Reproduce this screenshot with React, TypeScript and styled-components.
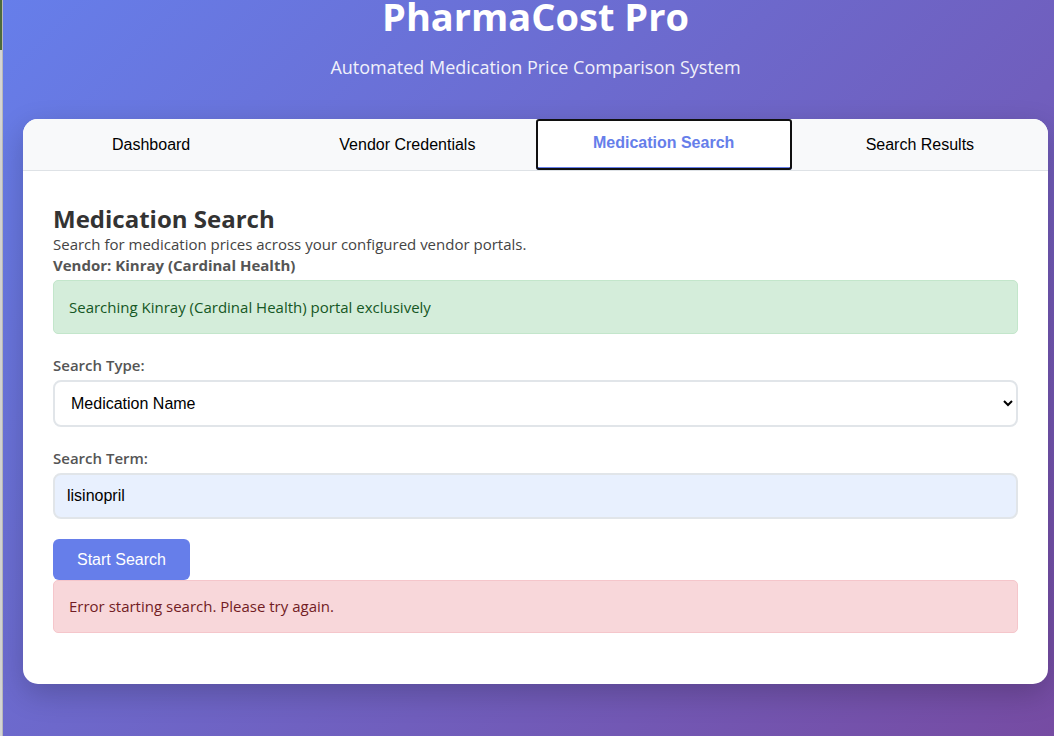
import React from "react";
import styled, { createGlobalStyle } from "styled-components";

const Global = createGlobalStyle`
  html, body { margin: 0; padding: 0; overflow: hidden; }
  body {
    width: 1054px;
    height: 736px;
    font-family: "Open Sans", "Noto Sans", sans-serif;
    background: #667eea;
  }
`;

const Screen = styled.div`
  display: flex;
  width: 1054px;
  height: 736px;
  overflow: hidden;
`;

const EdgeStrip = styled.div`
  flex: 0 0 3px;
  display: flex;
  flex-direction: column;
  background: #d4d4d4;
  border-right: 1px solid #b8b8b8;
  box-sizing: border-box;
`;

const EdgeTop = styled.div`
  height: 50px;
  background: #4c6a3c;
`;

const Page = styled.div`
  flex: 0 0 1065px;
  min-height: 736px;
  background: linear-gradient(135deg, #667eea 0%, #764ba2 100%);
  box-sizing: border-box;
  padding: 0 20px;
`;

const Header = styled.header`
  text-align: center;
  color: white;
  margin-top: -10px;
  margin-bottom: 40px;
`;

const Title = styled.h1`
  margin: 0 0 13px;
  font-size: 38px;
  font-weight: 700;
`;

const Subtitle = styled.p`
  margin: 0;
  font-size: 18px;
  opacity: 0.9;
`;

const Card = styled.main`
  background: white;
  border-radius: 15px;
  box-shadow: 0 10px 30px rgba(0, 0, 0, 0.2);
  overflow: hidden;
`;

const TabBar = styled.nav`
  display: flex;
  background: #f8f9fa;
  border-bottom: 1px solid #dee2e6;
`;

const Tab = styled.button<{ $active?: boolean }>`
  flex: 1;
  padding: 17px 20px 13px;
  border: none;
  background: ${(p) => (p.$active ? "white" : "none")};
  font-family: "Liberation Sans", Arial, sans-serif;
  font-size: 16px;
  color: ${(p) => (p.$active ? "#667eea" : "#000")};
  font-weight: ${(p) => (p.$active ? 700 : 400)};
  border-bottom: 3px solid ${(p) => (p.$active ? "#667eea" : "transparent")};
  outline: ${(p) => (p.$active ? "2px solid #101010" : "none")};
  outline-offset: -2px;
  border-radius: ${(p) => (p.$active ? "3px" : "0")};
  cursor: pointer;
`;

const ActiveLabel = styled.span`
  position: relative;
  top: -2px;
`;

const Content = styled.section`
  padding: 30px;
  color: #333;
`;

const Heading = styled.h2`
  margin: 2px 0 0;
  font-size: 24px;
  font-weight: 700;
  line-height: 1.3;
  color: #333;
`;

const Description = styled.p`
  margin: 0;
  font-size: 15px;
  line-height: 21px;
  color: #444;
`;

const VendorLine = styled.div`
  font-size: 15px;
  line-height: 21px;
  font-weight: 700;
  color: #555;
  margin-bottom: 4px;
`;

const Alert = styled.div<{ $tone: "success" | "error" }>`
  padding: 15px;
  border-radius: 5px;
  font-size: 15px;
  line-height: ${(p) => (p.$tone === "success" ? "22px" : "21px")};
  border: 1px solid ${(p) => (p.$tone === "success" ? "#c3e6cb" : "#f5c6cb")};
  background: ${(p) => (p.$tone === "success" ? "#d4edda" : "#f8d7da")};
  color: ${(p) => (p.$tone === "success" ? "#155724" : "#721c24")};
  margin-bottom: 21px;
`;

const FormGroup = styled.div<{ $gap?: number }>`
  margin-bottom: ${(p) => p.$gap ?? 20}px;
`;

const Label = styled.label`
  display: block;
  margin-bottom: 4px;
  font-size: 15px;
  line-height: 21px;
  font-weight: 600;
  color: #555;
`;

const Select = styled.select`
  display: block;
  width: 100%;
  height: 47px;
  box-sizing: border-box;
  padding: 0 12px;
  border: 2px solid #e1e5e9;
  border-radius: 8px;
  font-family: "Liberation Sans", Arial, sans-serif;
  font-size: 16px;
  background: white;
  color: #000;
`;

const Input = styled.input`
  display: block;
  width: 100%;
  height: 46px;
  box-sizing: border-box;
  padding: 0 12px;
  border: 2px solid #e1e5e9;
  border-radius: 8px;
  font-family: "Liberation Sans", Arial, sans-serif;
  font-size: 16px;
  background: #e8f0fe;
  color: #000;
`;

const Button = styled.button`
  display: block;
  height: 41px;
  padding: 0 24px;
  border: none;
  border-radius: 6px;
  background: #667eea;
  color: white;
  font-family: "Liberation Sans", Arial, sans-serif;
  font-size: 16px;
  cursor: pointer;
`;

const tabs = ["Dashboard", "Vendor Credentials", "Medication Search", "Search Results"];

export default function App() {
  return (
    <>
      <Global />
      <Screen>
        <EdgeStrip>
          <EdgeTop />
        </EdgeStrip>
        <Page>
          <Header>
            <Title>PharmaCost Pro</Title>
            <Subtitle>Automated Medication Price Comparison System</Subtitle>
          </Header>
          <Card>
            <TabBar>
              {tabs.map((t) => (
                <Tab key={t} $active={t === "Medication Search"}>
                  {t === "Medication Search" ? <ActiveLabel>{t}</ActiveLabel> : t}
                </Tab>
              ))}
            </TabBar>
            <Content>
              <Heading>Medication Search</Heading>
              <Description>Search for medication prices across your configured vendor portals.</Description>
              <VendorLine>Vendor: Kinray (Cardinal Health)</VendorLine>
              <Alert $tone="success">Searching Kinray (Cardinal Health) portal exclusively</Alert>
              <FormGroup $gap={21}>
                <Label htmlFor="stype">Search Type:</Label>
                <Select id="stype" defaultValue="name">
                  <option value="name">Medication Name</option>
                  <option value="ndc">NDC</option>
                </Select>
              </FormGroup>
              <FormGroup>
                <Label htmlFor="sterm">Search Term:</Label>
                <Input id="sterm" defaultValue="lisinopril" />
              </FormGroup>
              <Button>Start Search</Button>
              <Alert $tone="error">Error starting search. Please try again.</Alert>
            </Content>
          </Card>
        </Page>
      </Screen>
    </>
  );
}
